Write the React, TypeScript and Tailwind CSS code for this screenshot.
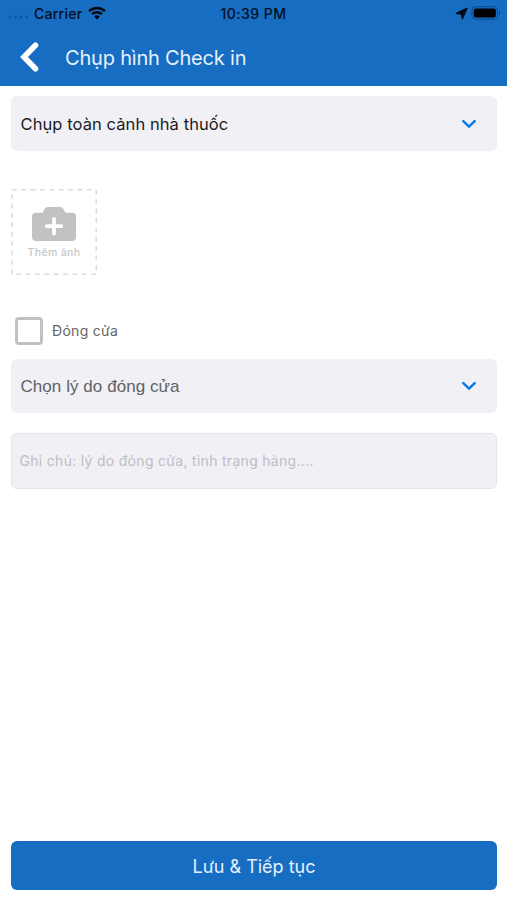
import type { ReactNode } from "react";

function Chevron() {
  return (
    <svg width="16" height="10" viewBox="0 0 16 10" fill="none" className="shrink-0">
      <path d="M2.3 2.1 8 7.6l5.700-5.500" stroke="#0b79ee" strokeWidth="2.500" strokeLinecap="round" strokeLinejoin="miter" />
    </svg>
  );
}

function SelectBox({ className, children }: { className: string; children: ReactNode }) {
  return (
    <button className={"flex w-full items-center justify-between rounded-md bg-[#f0f0f5] pr-5 pl-[9.5px] " + className}>
      {children}
      <Chevron />
    </button>
  );
}

function CameraPlus() {
  return (
    <svg width="44" height="34" viewBox="0 0 44 34" fill="none">
      <path
        d="M4 5.7h6.6l2.2-4Q13.7 0 15.5 0h13q1.8 0 2.7 1.7l2.2 4H40a4 4 0 0 1 4 4V30a4 4 0 0 1-4 4H4a4 4 0 0 1-4-4V9.7a4 4 0 0 1 4-4Z"
        fill="#c2c2c2"
      />
      <path d="M22 12v14.4M14.8 19.2h14.4" stroke="#fff" strokeWidth="3.8" strokeLinecap="round" />
    </svg>
  );
}

function StatusBar() {
  return (
    <div className="grid h-[26px] grid-cols-3 items-center text-[14px] font-medium text-[#04101d]">
      <div className="flex items-center pl-2">
        <svg width="22" height="4" viewBox="0 0 22 4" fill="#10559b" className="mt-2 mr-1">
          <circle cx="2" cy="2" r="1.3" />
          <circle cx="7.5" cy="2" r="1.3" />
          <circle cx="13" cy="2" r="1.3" />
          <circle cx="18.5" cy="2" r="1.3" />
        </svg>
        <span className="tracking-[0.25px]">Carrier</span>
        <svg width="18" height="14" viewBox="0 0 18 14" fill="none" stroke="#02080f" className="ml-[6px]">
          <path d="M1 5.1a11.6 11.6 0 0 1 16 0" strokeWidth="2.5" />
          <path d="M4 8.2a7.2 7.2 0 0 1 10 0" strokeWidth="2.4" />
          <path d="M9 13.6 6.1 10.7a4.1 4.1 0 0 1 5.8 0Z" fill="#02080f" stroke="none" />
        </svg>
      </div>
      <div className="text-center tracking-[0.45px] whitespace-nowrap">10:39 PM</div>
      <div className="flex items-center justify-end pr-[6px]">
        <svg width="13" height="13" viewBox="0 0 13 13" fill="#02080f" className="mr-[3px]">
          <path d="M12 1.2 7.4 11.7 6.4 7.1 1.2 6.3Z" stroke="#02080f" strokeWidth="1.2" strokeLinejoin="round" />
        </svg>
        <svg width="30" height="14" viewBox="0 0 30 14" fill="none">
          <rect x="1" y=".7" width="25.5" height="12.6" rx="3.6" stroke="#0d4b89" />
          <rect x="2.8" y="2.4" width="22" height="9.2" rx="2" fill="#000" />
          <path d="M28 5v4c1.4-.5 1.4-3.5 0-4Z" fill="#0d4b89" />
        </svg>
      </div>
    </div>
  );
}

export default function App() {
  return (
    <div className="flex h-[900px] w-[507px] flex-col bg-white font-['Inter','Liberation_Sans',sans-serif]">
      <header className="h-[86px] bg-[#166dc2]">
        <StatusBar />
        <div className="flex h-[62px] items-center pl-5">
          <svg width="20" height="32" viewBox="0 0 20 32" fill="none" className="mr-[25px]">
            <path d="M15.5 4.2 4 16l11.5 11.8" stroke="#fff" strokeWidth="5.6" strokeLinecap="round" strokeLinejoin="miter" />
          </svg>
          <h1 className="mt-0.5 text-[20px] tracking-[-0.2px] whitespace-nowrap text-[#e6f1fb]">Chụp hình Check in</h1>
        </div>
      </header>

      <main className="flex flex-1 flex-col items-start pt-[10px] pr-[10px] pb-[10px] pl-[11px]">
        <SelectBox className="h-[55px]">
          <span className="mt-0.5 text-[16.5px] tracking-[0.08px] text-[#1b1b1e]">Chụp toàn cảnh nhà thuốc</span>
        </SelectBox>

        <button className="mt-[38px] grid h-[86px] w-[86px]">
          <svg width="86" height="86" viewBox="0 0 86 86" fill="none" className="col-start-1 row-start-1">
            <rect x=".75" y=".75" width="84.5" height="84.5" stroke="#dcdcdc" strokeWidth="1.5" strokeDasharray="5 4.39" />
          </svg>
          <span className="col-start-1 row-start-1 flex flex-col items-center pt-[18px]">
            <CameraPlus />
            <span className="mt-[3.5px] text-[10.5px] leading-4 font-medium tracking-[0.35px] whitespace-nowrap text-[#c6c6c6]">Thêm ảnh</span>
          </span>
        </button>

        <label className="mt-[42px] ml-1 flex h-[28px] items-center">
          <span className="h-[28px] w-[28px] rounded-[4px] border-3 border-[#c1c1c1]" />
          <span className="-mt-px ml-[9px] text-[14px] tracking-[0.3px] text-[#666]">Đóng cửa</span>
        </label>

        <SelectBox className="mt-[14px] h-[54px]">
          <span className="mt-0.5 font-['Liberation_Sans',sans-serif] text-[17px] tracking-[0.06px] text-[#626266]">Chọn lý do đóng cửa</span>
        </SelectBox>

        <input
          className="mt-5 h-14 w-full rounded-md border border-[#e4e4e9] bg-[#f0f0f5] px-[7.5px] pb-0.5 text-[14px] tracking-[0.3px] placeholder:text-[#bebec3]"
          placeholder="Ghi chú: lý do đóng cửa, tình trạng hàng...."
        />

        <button className="mt-auto h-[49px] w-full rounded-md bg-[#166dc2] pt-0.5 text-[18px] text-[#e6f1fb]">Lưu &amp; Tiếp tục</button>
      </main>
    </div>
  );
}
